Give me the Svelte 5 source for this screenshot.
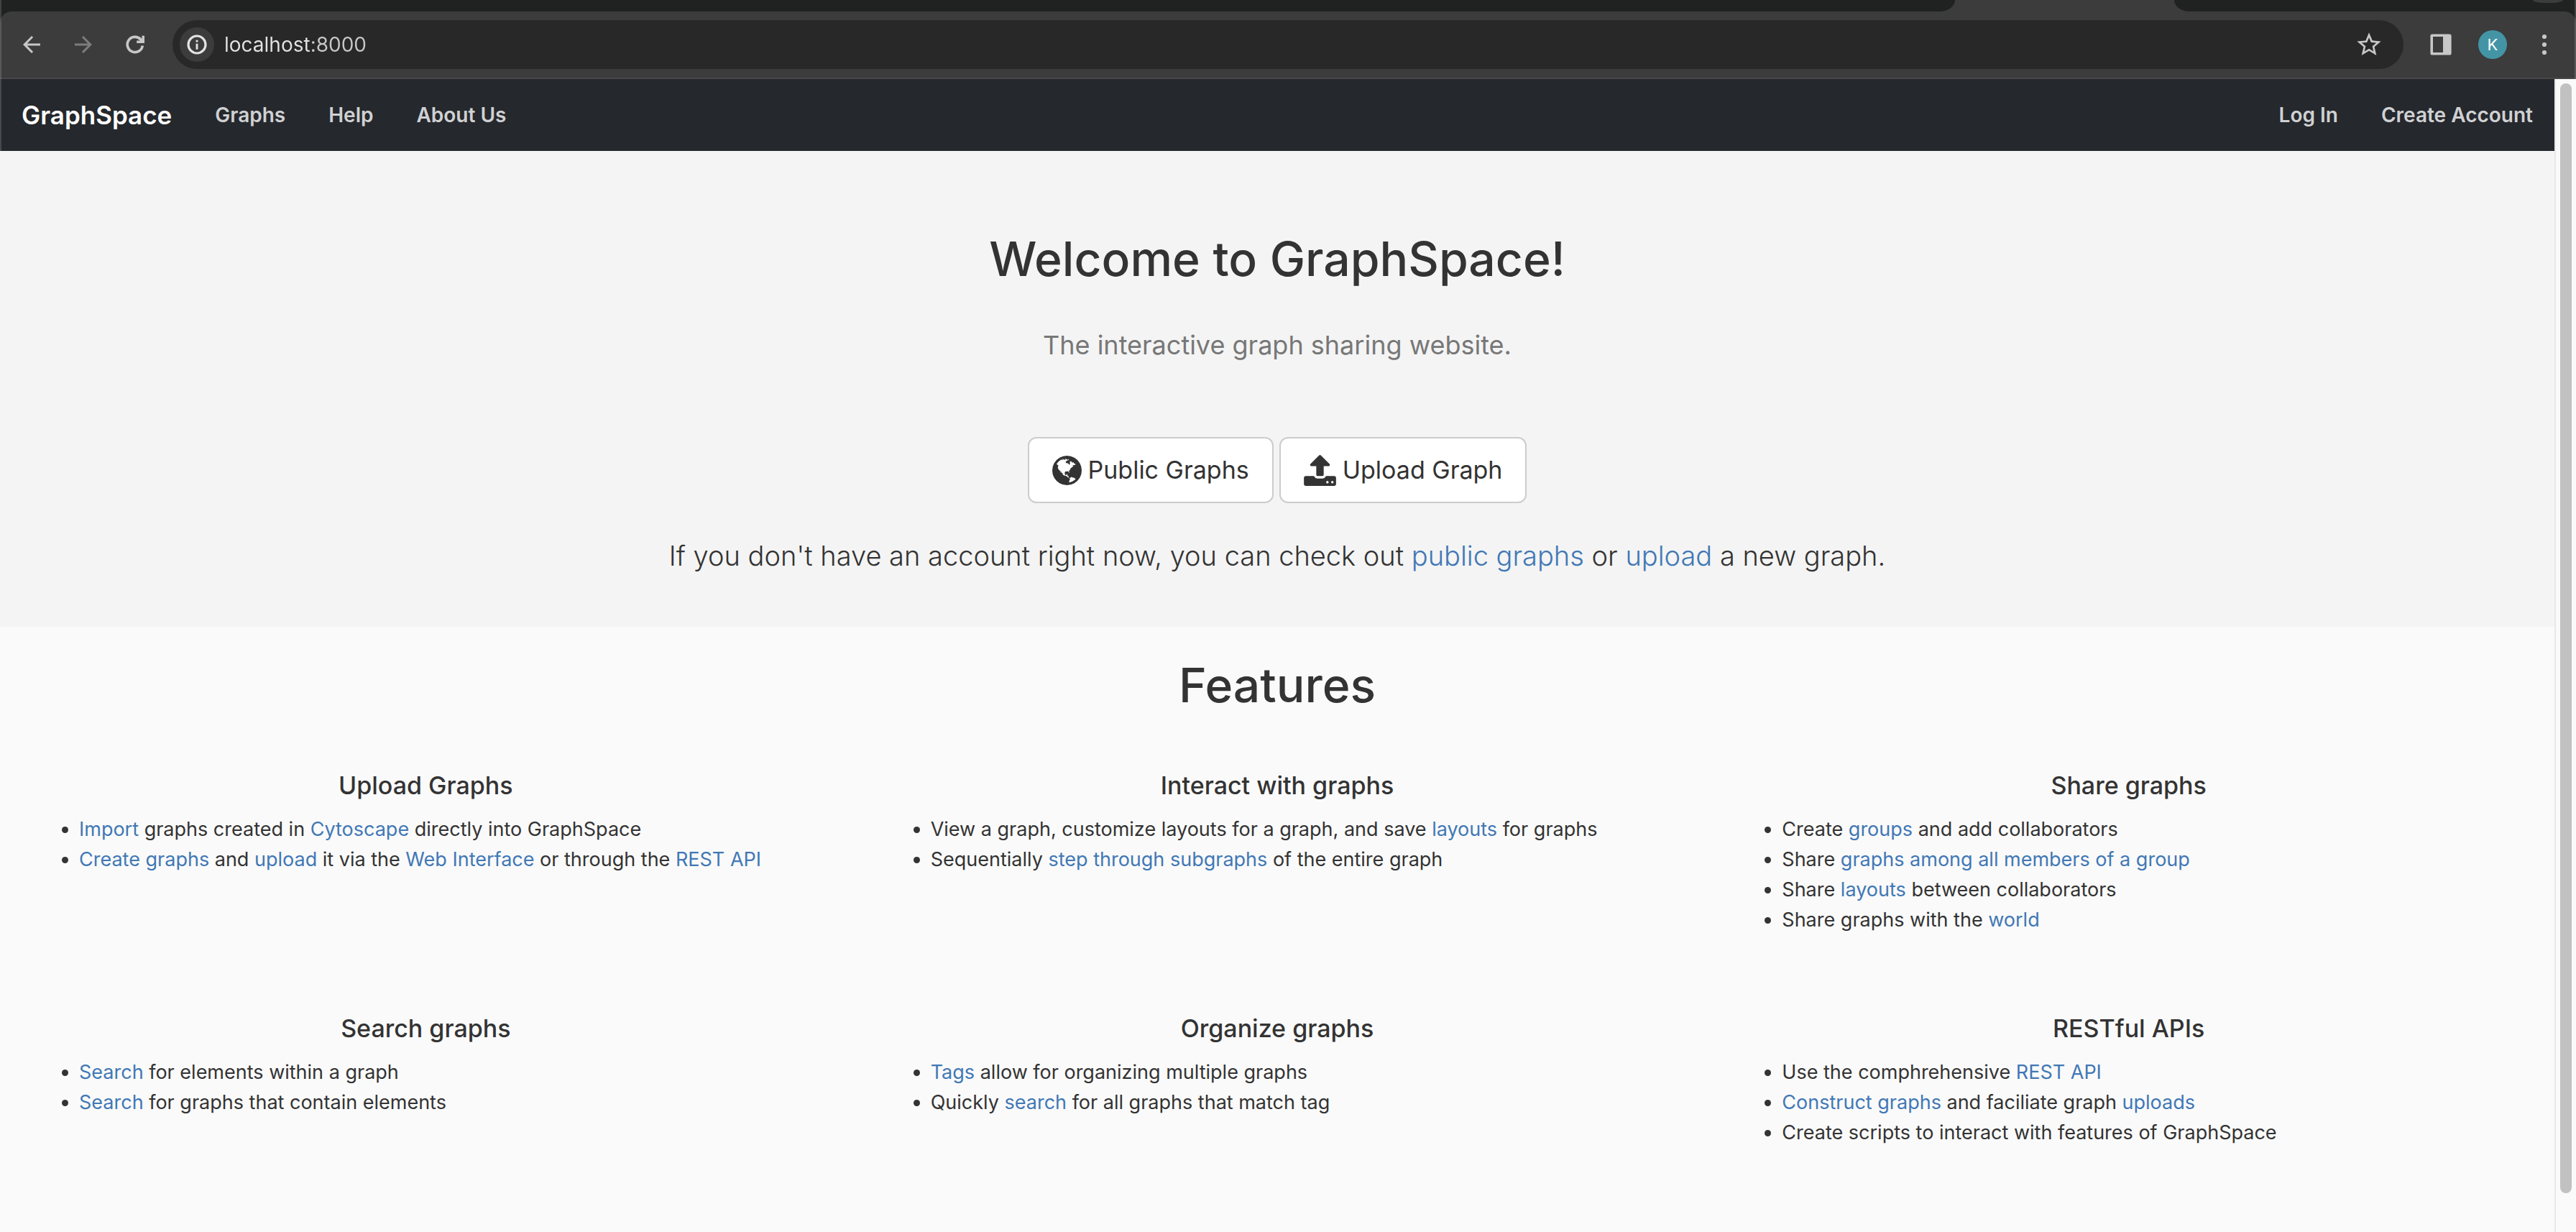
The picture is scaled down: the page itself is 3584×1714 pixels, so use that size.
<script>
  // A list entry is a sequence of parts: plain strings, or [text] for a link.
  const features = [
    {
      title: 'Upload Graphs',
      items: [
        [['Import'], ' graphs created in ', ['Cytoscape'], ' directly into GraphSpace'],
        [['Create graphs'], ' and ', ['upload'], ' it via the ', ['Web Interface'], ' or through the ', ['REST API']]
      ]
    },
    {
      title: 'Interact with graphs',
      items: [
        ['View a graph, customize layouts for a graph, and save ', ['layouts'], ' for graphs'],
        ['Sequentially ', ['step through subgraphs'], ' of the entire graph']
      ]
    },
    {
      title: 'Share graphs',
      items: [
        ['Create ', ['groups'], ' and add collaborators'],
        ['Share ', ['graphs among all members of a group']],
        ['Share ', ['layouts'], ' between collaborators'],
        ['Share graphs with the ', ['world']]
      ]
    },
    {
      title: 'Search graphs',
      items: [
        [['Search'], ' for elements within a graph'],
        [['Search'], ' for graphs that contain elements']
      ]
    },
    {
      title: 'Organize graphs',
      items: [
        [['Tags'], ' allow for organizing multiple graphs'],
        ['Quickly ', ['search'], ' for all graphs that match tag']
      ]
    },
    {
      title: 'RESTful APIs',
      items: [
        ['Use the comphrehensive ', ['REST API']],
        [['Construct graphs'], ' and faciliate graph ', ['uploads']],
        ['Create scripts to interact with features of GraphSpace']
      ]
    }
  ];
</script>

<div class="window">
  <div class="chrome">
    <div class="tabstrip">
      <div class="tabs-before"></div>
      <div class="tab-active"></div>
      <div class="tabs-after"><div class="tab-search"></div></div>
    </div>
    <div class="toolbar">
      <div class="history">
        <button class="tool" aria-label="Back">
          <svg viewBox="0 0 24 24"><path fill="currentColor" d="M20 11H7.83l5.59-5.59L12 4l-8 8 8 8 1.41-1.41L7.83 13H20z" /></svg>
        </button>
        <button class="tool dim" aria-label="Forward">
          <svg viewBox="0 0 24 24"><path fill="currentColor" d="M4 13h12.17l-5.59 5.59L12 20l8-8-8-8-1.41 1.41L16.17 11H4z" /></svg>
        </button>
        <button class="tool" aria-label="Reload">
          <svg viewBox="0 0 36 36">
            <path fill="none" stroke="currentColor" stroke-width="3.6" d="M28.3 19.4A10.6 10.6 0 1 1 25.6 10.8" />
            <path fill="currentColor" d="M27.4 5.8H31V16H20.2v-3.5h4.6l-2.6-2.6 2.6-2.4 2.6 2.5z" />
          </svg>
        </button>
      </div>
      <div class="omnibox">
        <button class="site-info" aria-label="View site information">
          <svg viewBox="0 0 28 28">
            <circle cx="14" cy="14" r="12" fill="none" stroke="currentColor" stroke-width="3.2" />
            <path fill="currentColor" d="M12.6 12.8h2.8v8h-2.8zM12.6 7.8h2.8v2.8h-2.8z" />
          </svg>
        </button>
        <input class="url" type="text" value="localhost:8000" aria-label="Address" />
        <button class="star" aria-label="Bookmark this page">
          <svg viewBox="0 0 24 24"><path fill="currentColor" d="M22 9.24l-7.19-.62L12 2 9.19 8.63 2 9.24l5.46 4.73L5.82 21 12 17.27 18.18 21l-1.63-7.03L22 9.24zM12 15.4l-3.76 2.27 1-4.28-3.32-2.88 4.38-.38L12 6.1l1.71 4.04 4.38.38-3.32 2.88 1 4.28L12 15.4z" /></svg>
        </button>
      </div>
      <button class="tool" aria-label="Side panel">
        <svg viewBox="0 0 36 36"><path fill="currentColor" fill-rule="evenodd" d="M6 3.4h24a2.6 2.6 0 0 1 2.6 2.6v24a2.6 2.6 0 0 1-2.6 2.6H6A2.6 2.6 0 0 1 3.4 30V6A2.6 2.6 0 0 1 6 3.400zM7 7v22h14V7z" /></svg>
      </button>
      <button class="avatar" aria-label="Profile">K</button>
      <button class="tool" aria-label="Menu">
        <svg viewBox="0 0 36 36"><g fill="currentColor"><circle cx="18" cy="7" r="3.1" /><circle cx="18" cy="18" r="3.1" /><circle cx="18" cy="29" r="3.1" /></g></svg>
      </button>
    </div>
  </div>

  <div class="viewport">
    <div class="page">
      <nav class="navbar">
        <a class="brand" href="#home">GraphSpace</a>
        <a class="nav-link" href="#graphs">Graphs</a>
        <a class="nav-link" href="#help">Help</a>
        <a class="nav-link" href="#about">About Us</a>
        <span class="spacer"></span>
        <a class="nav-link" href="#login">Log In</a>
        <a class="nav-link" href="#register">Create Account</a>
      </nav>

      <header class="hero">
        <h1>Welcome to GraphSpace!</h1>
        <p class="tagline">The interactive graph sharing website.</p>
        <div class="actions">
          <button class="btn">
            <svg class="globe" viewBox="0 128 1536 1536" aria-hidden="true"><path fill="currentColor" d="M768 128q209 0 385.5 103t279.5 279.5 103 385.5-103 385.5-279.5 279.5-385.5 103-385.5-103-279.5-279.5-103-385.5 103-385.5 279.5-279.5 385.5-103zm274 521q-2 1-9.5 9.5t-13.5 9.5q2 0 4.5-5t5-11 3.5-7q6-7 22-15 14-6 52-12 34-8 51 11-2-2 9.5-13t14.5-12q3-2 15-4.5t15-7.5l2-22q-12 1-17.5-7t-6.5-21q0 2-6 8 0-7-4.5-8t-11.5 1-9 1q-10-3-15-7.5t-8-16.5-4-15q-2-5-9.5-11t-9.5-10q-1-2-2.5-5.5t-3-6.5-4-5.5-5.5-2.5-7 5-7.5 10-4.5 5q-3-2-6-1.5t-4.5 1-4.5 3-5 3.5q-3 2-8.5 3t-8.5 2q15-5-1-11-10-4-16-3 9-4 7.5-12t-8.5-14h5q-1-4-8.5-8.5t-17.5-8.5-13-6q-8-5-34-9.5t-33-.5q-5 6-4.5 10.5t4 14 3.5 12.5q1 6-5.5 13t-6.5 12q0 7 14 15.5t10 21.5q-3 8-16 16t-16 12q-5 8-1.5 18.5t10.5 16.5q2 2 1.5 4t-3.5 4.5-5.5 4-6.5 3.5l-3 2q-11 5-20.5-6t-13.5-26q-7-25-16-30-23-8-29 1-5-13-41-26-25-9-58-4 6-1 0-15-7-15-19-12 3-6 4-17.5t1-13.5q3-13 12-23 1-1 7-8.5t9.5-13.5.5-6q35 4 50-11 5-5 11.5-17t10.5-17q9-6 14-5.5t14.5 5.5 14.5 5q14 1 15.5-11t-7.5-20q12 1 3-17-5-7-8-9-12-4-27 5-8 4 2 8-1-1-9.5 10.5t-16.5 17.5-16-5q-1-1-5.5-13.5t-9.5-13.5q-8 0-16 15 3-8-11-15t-24-8q19-12-8-27-7-4-20.5-5t-19.5 4q-5 7-5.5 11.5t5 8 10.5 5.5 11.5 4 8.5 3q14 10 8 14-2 1-8.5 3.5t-11.5 4.5-6 4q-3 4 0 14t-2 14q-5-5-9-17.5t-7-16.5q7 9-25 6l-10-1q-4 0-16 2t-20.5 1-13.5-8q-4-8 0-20 1-4 4-2-4-3-11-9.5t-10-8.5q-46 15-94 41 6 1 12-1 5-2 13-6.5t10-5.5q34-14 42-7l5-5q14 16 20 25-7-4-30-1-20 6-22 12 7 12 5 18-4-3-11.5-10t-14.5-11-15-5q-16 0-22 1-146 80-235 222 7 7 12 8 4 1 5 9t2.5 11 11.5-3q9 8 3 19 1-1 44 27 19 17 21 21 3 11-10 18-1-2-9-9t-9-4q-3 5 .5 18.5t10.5 12.5q-7 0-9.5 16t-2.5 35.5-1 23.5l2 1q-3 12 5.5 34.5t21.5 19.5q-13 3 20 43 6 8 8 9 3 2 12 7.5t15 10 10 10.5q4 5 10 22.5t14 23.5q-2 6 9.5 20t10.5 23q-1 0-2.5 1t-2.5 1q3 7 15.5 14t15.5 13q1 3 2 10t3 11 8 2q2-20-24-62-15-25-17-29-3-5-5.5-15.5t-4.5-14.5q2 0 6 1.5t8.5 3.5 7.5 4 2 3q-3 7 2 17.5t12 18.5 17 19 12 13q6 6 14 19.5t0 13.5q9 0 20 10.5t17 19.5q5 8 8 26t5 24q2 7 8.5 13.5t12.5 9.5l16 8 13 7q5 2 18.5 10.5t21.5 11.5q10 4 16 4t14.5-2.5 13.5-3.5q15-2 29 15t21 21q36 19 55 11-2 1 .5 7.5t8 15.5 9 14.5 5.5 8.5q5 6 18 15t18 15q6-4 7-9-3 8 7 20t18 10q14-3 14-32-31 15-49-18 0-1-2.5-5.5t-4-8.5-2.5-8.5 0-7.5 5-3q9 0 10-3.5t-2-12.5-4-13q-1-8-11-20t-12-15q-5 9-16 8t-16-9q0 1-1.5 5.5t-1.5 6.5q-13 0-15-1 1-3 2.5-17.5t3.5-22.5q1-4 5.5-12t7.5-14.5 4-12.5-4.5-9.5-17.5-2.5q-19 1-26 20-1 3-3 10.5t-5 11.5-9 7q-7 3-24 2t-24-5q-13-8-22.5-29t-9.5-37q0-10 2.5-26.5t3-25-5.5-24.5q3-2 9-9.5t10-10.5q2-1 4.5-1.5t4.5 0 4-1.5 3-6q-1-1-4-3-3-3-4-3 7 3 28.5-1.5t27.5 1.5q15 11 22-2 0-1-2.5-9.5t-.5-13.5q5 27 29 9 3 3 15.5 5t17.5 5q3 2 7 5.5t5.5 4.5 5-.5 8.5-6.5q10 14 12 24 11 40 19 44 7 3 11 2t4.5-9.5 0-14-1.5-12.5l-1-8v-18l-1-8q-15-3-18.5-12t1.5-18.5 15-18.5q1-1 8-3.5t15.5-6.5 12.5-8q21-19 15-35 7 0 11-9-1 0-5-3t-7.5-5-4.5-2q9-5 2-16 5-3 7.5-11t7.5-10q9 12 21 2 8-8 1-16 5-7 20.5-10.5t18.5-9.5q7 2 8-2t1-12 3-12q4-5 15-9t13-5l17-11q3-4 0-4 18 2 31-11 10-11-6-20 3-6-3-9.5t-15-5.5q3-1 11.5-.5t10.5-1.5q15-10-7-16-17-5-43 12zm-163 877q206-36 351-189-3-3-12.5-4.5t-12.5-3.5q-18-7-24-8 1-7-2.5-13t-8-9-12.5-8-11-7q-2-2-7-6t-7-5.5-7.5-4.5-8.5-2-10 1l-3 1q-3 1-5.5 2.5t-5.5 3-4 3 0 2.5q-21-17-36-22-5-1-11-5.5t-10.5-7-10-1.5-11.5 7q-5 5-6 15t-2 13q-7-5 0-17.5t2-18.5q-3-6-10.5-4.5t-12 4.5-11.5 8.5-9 6.5-8.5 5.5-8.5 7.5q-3 4-6 12t-5 11q-2-4-11.5-6.5t-9.5-5.5q2 10 4 35t5 38q7 31-12 48-27 25-29 40-4 22 12 26 0 7-8 20.5t-7 21.5q0 6 2 16z" /></svg>
            Public Graphs
          </button>
          <button class="btn">
            <svg class="upload" viewBox="64 64 1664 1600" aria-hidden="true"><path fill="currentColor" d="M1344 1472q0-26-19-45t-45-19-45 19-19 45 19 45 45 19 45-19 19-45zm256 0q0-26-19-45t-45-19-45 19-19 45 19 45 45 19 45-19 19-45zm128-224v320q0 40-28 68t-68 28h-1472q-40 0-68-28t-28-68v-320q0-40 28-68t68-28h427q21 56 70.500 92t110.500 36h256q61 0 110.500-36t70.500-92h427q40 0 68 28t28 68zm-325-648q-17 40-59 40h-256v448q0 26-19 45t-45 19h-256q-26 0-45-19t-19-45v-448h-256q-42 0-59-40-17-39 14-69l448-448q18-19 45-19t45 19l448 448q31 30 14 69z" /></svg>
            Upload Graph
          </button>
        </div>
        <p class="lead">
          If you don't have an account right now, you can check out <a href="#public">public graphs</a> or <a href="#upload">upload</a> a new graph.
        </p>
      </header>

      <main class="features">
        <h1>Features</h1>
        <div class="grid">
          {#each features as feature}
            <section>
              <h4>{feature.title}</h4>
              <ul>
                {#each feature.items as parts}
                  <li>{#each parts as part}{#if typeof part === 'string'}{part}{:else}<a href="#docs">{part[0]}</a>{/if}{/each}</li>
                {/each}
              </ul>
            </section>
          {/each}
        </div>
      </main>
    </div>
    <div class="scrollbar"><div class="thumb"></div></div>
  </div>
</div>

<style>
  :global(body) {
    margin: 0;
    background: #fafafa;
  }
  .window {
    position: relative;
    display: flex;
    flex-direction: column;
    min-height: 100vh;
    font-family: Inter, 'Liberation Sans', sans-serif;
    font-size: 27px;
    line-height: 42px;
    color: #333;
  }
  /* Light edge that the window frame casts over its contents */
  .window::after {
    content: '';
    position: absolute;
    inset: 0;
    border: solid rgba(255, 255, 255, 0.15);
    border-width: 0 2px;
    pointer-events: none;
  }
  a {
    color: #4178b5;
    text-decoration: none;
  }
  button {
    margin: 0;
    padding: 0;
    border: 0;
    background: none;
    font: inherit;
    color: inherit;
  }
  svg {
    display: block;
  }

  .chrome {
    background: #202221;
  }
  .tabstrip {
    display: flex;
    height: 16px;
    background: #3c3c3c;
  }
  .tabs-before {
    flex: 1;
    background: #202221;
    border-bottom-right-radius: 24px 18px;
  }
  .tab-active {
    width: 305px;
  }
  .tabs-after {
    display: flex;
    justify-content: flex-end;
    width: 559px;
    background: #202221;
    border-bottom-left-radius: 24px 18px;
  }
  .tab-search {
    width: 42px;
    height: 4px;
    margin-right: 18px;
    background: #3c3c3c;
    border-radius: 0 0 16px 16px / 0 0 4px 4px;
  }
  .toolbar {
    display: flex;
    align-items: center;
    gap: 34px;
    padding: 12px 26px;
    border-bottom: 2px solid #484848;
    border-radius: 16px 16px 0 0;
    background: #3c3c3c;
    color: #c7c7c7;
  }
  .history {
    display: flex;
    gap: 36px;
  }
  .tool {
    width: 36px;
    height: 36px;
  }
  .dim {
    color: #7c7c7c;
  }
  .omnibox {
    display: flex;
    flex: 1;
    align-items: center;
    gap: 14px;
    height: 68px;
    padding: 0 28px 0 10px;
    box-sizing: border-box;
    border-radius: 34px;
    background: #282828;
  }
  .site-info {
    display: grid;
    place-items: center;
    width: 48px;
    height: 48px;
    border-radius: 50%;
    background: #3c3c3c;
    color: #e3e3e3;
  }
  .site-info svg {
    width: 28px;
    height: 28px;
  }
  /* Host name in a brighter tone than the port */
  .url {
    flex: 1;
    min-width: 0;
    padding: 0;
    border: 0;
    outline: 0;
    font: inherit;
    font-size: 28px;
    color: transparent;
    background: linear-gradient(90deg, #e3e3e3 121px, #c7c7c7 121px);
    -webkit-background-clip: text;
    background-clip: text;
  }
  .star {
    width: 40px;
    height: 40px;
  }
  .avatar {
    width: 40px;
    height: 40px;
    border-radius: 50%;
    background: #4395a6;
    color: #fff;
    font-size: 22px;
    line-height: 40px;
    text-align: center;
  }

  .viewport {
    display: flex;
    flex: 1;
  }
  .page {
    flex: 1;
    min-width: 0;
    background: #fafafa;
  }
  .navbar {
    display: flex;
    align-items: center;
    height: 100px;
    background: #25282d;
    font-weight: 600;
  }
  .brand {
    padding: 0 30px;
    font-size: 35px;
    color: #fff;
  }
  .nav-link {
    padding: 0 30px;
    font-size: 28px;
    color: #d0d1d2;
  }
  .spacer {
    flex: 1;
  }

  h1,
  h4,
  p,
  ul {
    margin: 0;
  }
  h1 {
    font-size: 66px;
    font-weight: 500;
    line-height: 80px;
    text-align: center;
  }
  .hero {
    padding: 110px 30px 69px;
    background: #f4f4f4;
    text-align: center;
  }
  .tagline {
    margin-top: 54px;
    font-size: 36px;
    line-height: 52px;
    color: #777;
  }
  .actions {
    display: flex;
    justify-content: center;
    gap: 8px;
    margin-top: 102px;
  }
  .btn {
    display: flex;
    align-items: center;
    gap: 9px;
    height: 92px;
    padding: 0 32px;
    border: 2px solid #ccc;
    border-radius: 12px;
    background: #fff;
    font-size: 34px;
  }
  .globe {
    width: 41px;
    height: 41px;
  }
  .upload {
    width: 45px;
    height: 43px;
  }
  .lead {
    margin-top: 43px;
    font-size: 38px;
    font-weight: 350;
    line-height: 60px;
  }
  .features {
    padding-top: 41px;
  }
  .grid {
    display: grid;
    grid-template-columns: repeat(3, 1fr);
    row-gap: 110px;
    margin-top: 80px;
  }
  h4 {
    font-size: 34px;
    font-weight: 500;
    line-height: 40px;
    text-align: center;
  }
  ul {
    margin-top: 20px;
    padding: 0 30px 0 110px;
  }

  .scrollbar {
    width: 28px;
    padding: 6px 0;
    border-left: 2px solid #e8e8e8;
    background: #fafafa;
  }
  .thumb {
    width: 16px;
    height: 97%;
    margin-left: 6px;
    border-radius: 8px;
    background: #c1c1c1;
  }
</style>
